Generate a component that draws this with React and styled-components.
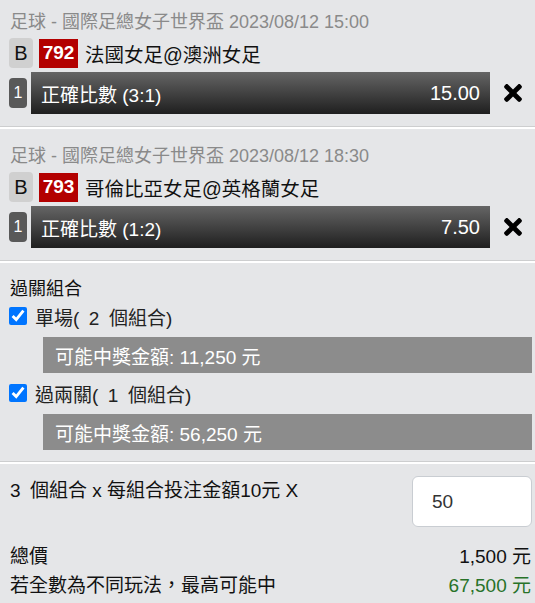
import React from "react";
import styled, { createGlobalStyle } from "styled-components";
import { FaTimes } from "react-icons/fa";

const GlobalStyle = createGlobalStyle`
  html, body {
    margin: 0;
    padding: 0;
    background: #e5e6e8;
  }
  body {
    font-family: "Liberation Sans", "Noto Sans CJK TC", sans-serif;
    color: #111;
  }
`;

const Page = styled.div`
  width: 535px;
  background: #e5e6e8;
`;

const Section = styled.section`
  padding: ${props => props.top}px 3px ${props => props.bottom || 12}px 9px;
  border-bottom: 1px solid #cdcecf;
  box-shadow: 0 2px 0 #fff;
  margin-bottom: 3px;
  &:last-child {
    border-bottom: none;
    box-shadow: none;
    margin-bottom: 0;
  }
`;

const MatchHeader = styled.div`
  font-size: 18px;
  line-height: 22px;
  color: #8a8a8a;
  padding-left: 1px;
`;

const TeamRow = styled.div`
  display: flex;
  align-items: center;
  margin-top: 5px;
  height: 30px;
`;

const TypeBadge = styled.span`
  width: 24px;
  height: 30px;
  border-radius: 4px;
  background: #d0d0d0;
  color: #111;
  font-size: 20px;
  display: flex;
  align-items: center;
  justify-content: center;
`;

const MatchNo = styled.span`
  margin-left: 6px;
  width: 39px;
  height: 29px;
  background: #b30000;
  color: #fff;
  font-size: 19px;
  font-weight: 600;
  display: flex;
  align-items: center;
  justify-content: center;
`;

const Teams = styled.span`
  margin-left: 7px;
  font-size: 19.5px;
  color: #111;
`;

const SelectionRow = styled.div`
  display: flex;
  align-items: center;
  margin-top: 4px;
  height: 42px;
`;

const LegNo = styled.span`
  width: 18px;
  height: 30px;
  border-radius: 4px;
  background: #595959;
  color: #fff;
  font-size: 16px;
  display: flex;
  align-items: center;
  justify-content: center;
  margin-right: 4px;
`;

const OddsBar = styled.div`
  flex: 1;
  height: 42px;
  display: flex;
  align-items: center;
  justify-content: space-between;
  padding: 0 10px 0 10px;
  background: linear-gradient(#656565, #1f1f1f);
  color: #fff;
`;

const BetLabel = styled.span`
  font-size: 19px;
`;

const Odds = styled.span`
  font-size: 20px;
`;

const RemoveCell = styled.div`
  width: 42px;
  height: 42px;
  display: flex;
  align-items: center;
  justify-content: center;
  padding-left: 4px;
  box-sizing: border-box;
  color: #000;
`;

const Title = styled.div`
  font-size: 18px;
  line-height: 22px;
  padding-left: 1px;
`;

const ComboRow = styled.label`
  display: flex;
  align-items: center;
  gap: 8px;
  height: 22px;
  margin-top: ${props => props.gap}px;
  font-size: 19px;
  color: #222;
`;

const Check = styled.input`
  width: 18px;
  height: 18px;
  margin: 0;
  accent-color: #0075ff;
`;

const PrizeBar = styled.div`
  margin: 10px 0 0 34px;
  height: 36px;
  background: #8c8c8c;
  color: #fff;
  font-size: 19px;
  display: flex;
  align-items: center;
  padding-left: 12px;
`;

const StakeRow = styled.div`
  display: flex;
  justify-content: space-between;
  align-items: flex-start;
`;

const StakeText = styled.span`
  margin-top: 4px;
  font-size: 19px;
  line-height: 22px;
  padding-left: 1px;
`;

const StakeInput = styled.input`
  width: 120px;
  height: 51px;
  box-sizing: border-box;
  border: 1px solid #c9cdd2;
  border-radius: 6px;
  background: #fff;
  padding: 0 0 0 19px;
  font-family: "Liberation Sans", sans-serif;
  font-size: 19px;
  color: #333;
  outline: none;
`;

const SummaryRow = styled.div`
  display: flex;
  justify-content: space-between;
  align-items: center;
  height: 29px;
  margin-top: ${props => props.gap || 0}px;
  font-size: 19px;
  padding-left: 1px;
  padding-right: 1px;
`;

const Amount = styled.span`
  color: ${props => props.color || "#111"};
`;

const bets = [
  {
    header: "足球 - 國際足總女子世界盃 2023/08/12 15:00",
    no: "792",
    teams: "法國女足@澳洲女足",
    pick: "正確比數 (3:1)",
    odds: "15.00"
  },
  {
    header: "足球 - 國際足總女子世界盃 2023/08/12 18:30",
    no: "793",
    teams: "哥倫比亞女足@英格蘭女足",
    pick: "正確比數 (1:2)",
    odds: "7.50"
  }
];

const combos = [
  { label: "單場(\u20022\u2002個組合)", prize: "可能中獎金額: 11,250 元", gap: 5 },
  { label: "過兩關(\u20021\u2002個組合)", prize: "可能中獎金額: 56,250 元", gap: 9 }
];

export default function App() {
  return (
    <Page>
      <GlobalStyle />
      {bets.map((bet, index) => (
        <Section key={bet.no} top={index === 0 ? 11 : 15}>
          <MatchHeader>{bet.header}</MatchHeader>
          <TeamRow>
            <TypeBadge>B</TypeBadge>
            <MatchNo>{bet.no}</MatchNo>
            <Teams>{bet.teams}</Teams>
          </TeamRow>
          <SelectionRow>
            <LegNo>1</LegNo>
            <OddsBar>
              <BetLabel>{bet.pick}</BetLabel>
              <Odds>{bet.odds}</Odds>
            </OddsBar>
            <RemoveCell>
              <FaTimes size={26} />
            </RemoveCell>
          </SelectionRow>
        </Section>
      ))}
      <Section top={14} bottom={11}>
        <Title>過關組合</Title>
        {combos.map(combo => (
          <React.Fragment key={combo.label}>
            <ComboRow gap={combo.gap}>
              <Check type="checkbox" defaultChecked />
              {combo.label}
            </ComboRow>
            <PrizeBar>{combo.prize}</PrizeBar>
          </React.Fragment>
        ))}
      </Section>
      <Section top={11}>
        <StakeRow>
          <StakeText>3&#8194;個組合 x 每組合投注金額10元 X</StakeText>
          <StakeInput defaultValue="50" />
        </StakeRow>
        <SummaryRow gap={13}>
          <span>總價</span>
          <Amount>1,500 元</Amount>
        </SummaryRow>
        <SummaryRow>
          <span>若全數為不同玩法，最高可能中</span>
          <Amount color="#287228">67,500 元</Amount>
        </SummaryRow>
      </Section>
    </Page>
  );
}
